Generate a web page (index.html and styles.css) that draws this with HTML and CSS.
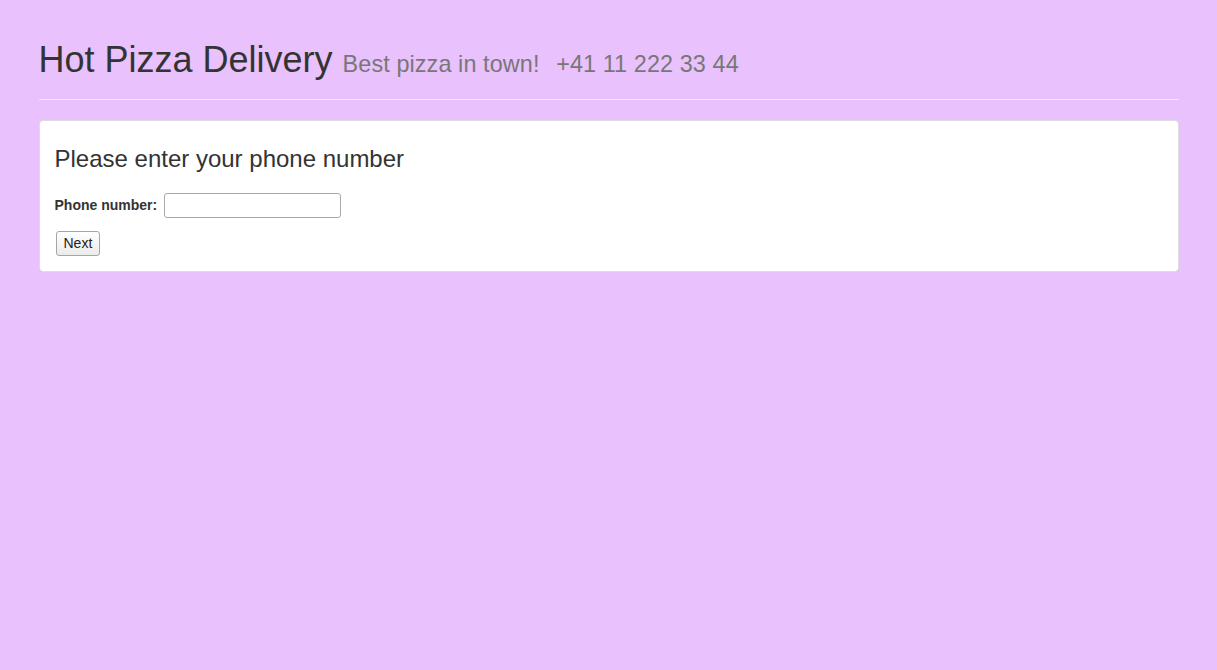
FILE: index.html
```html
<!DOCTYPE html>
<html lang="en">
<head>
<meta charset="utf-8">
<title>Hot Pizza Delivery</title>
<link rel="stylesheet" href="styles.css">
</head>
<body>
<div class="container">
  <div class="page-header">
    <h1>Hot Pizza Delivery <small>Best pizza in town!&nbsp;</small> <small>+41 11 222 33 44</small></h1>
  </div>
  <div class="panel">
    <div class="panel-body">
      <h3 class="panel-title">Please enter your phone number</h3>
      <form class="phone-form">
        <div class="form-row">
          <label class="form-label" for="phone">Phone number:</label>
          <input class="text-input" type="text" id="phone" name="phone">
        </div>
        <div class="form-actions">
          <button class="btn" type="button">Next</button>
        </div>
      </form>
    </div>
  </div>
</div>
</body>
</html>
```

FILE: styles.css
```css
* {
  box-sizing: border-box;
}

html, body {
  margin: 0;
  padding: 0;
}

body {
  background: #e9c1fd;
  font-family: "Liberation Sans", Arial, Helvetica, sans-serif;
  font-size: 14px;
  line-height: 1.42857;
  color: #333;
}

.container {
  width: 1170px;
  margin: 0 auto;
  padding: 0 15px;
}

.page-header {
  margin: 40px 0 20px;
  padding-bottom: 9px;
  border-bottom: 1px solid #eee;
}

.page-header h1 {
  margin: 0 0 10px;
  font-size: 36px;
  font-weight: 500;
  line-height: 1.1;
  color: #333;
}

.page-header small {
  font-size: 65%;
  font-weight: 400;
  color: #777;
  letter-spacing: 0.1px;
}

.panel {
  background: #fff;
  border: 1px solid #ddd;
  border-radius: 4px;
  box-shadow: 0 1px 1px rgba(0, 0, 0, 0.05);
}

.panel-body {
  padding: 15px;
}

.panel-title {
  margin: 10px 0 0;
  font-size: 24px;
  font-weight: 500;
  line-height: 1.1;
  color: #333;
}

.phone-form {
  margin: 0;
}

.form-row {
  display: flex;
  align-items: center;
  gap: 7px;
  margin-top: 21px;
}

.form-label {
  font-weight: 700;
  font-size: 14px;
  line-height: 20px;
}

.text-input {
  width: 177px;
  height: 25px;
  border: 1px solid #a9a9a9;
  border-radius: 3px;
  padding: 1px 3px;
  font: inherit;
  background: #fff;
}

.form-actions {
  margin-top: 13px;
  display: flex;
}

.btn {
  height: 25px;
  margin-left: 1px;
  padding: 0 7px;
  font-family: inherit;
  font-size: 14px;
  line-height: 20px;
  color: #222;
  background: linear-gradient(#ffffff, #ebebeb);
  border: 1px solid #a6a6a6;
  border-radius: 3px;
}
```
